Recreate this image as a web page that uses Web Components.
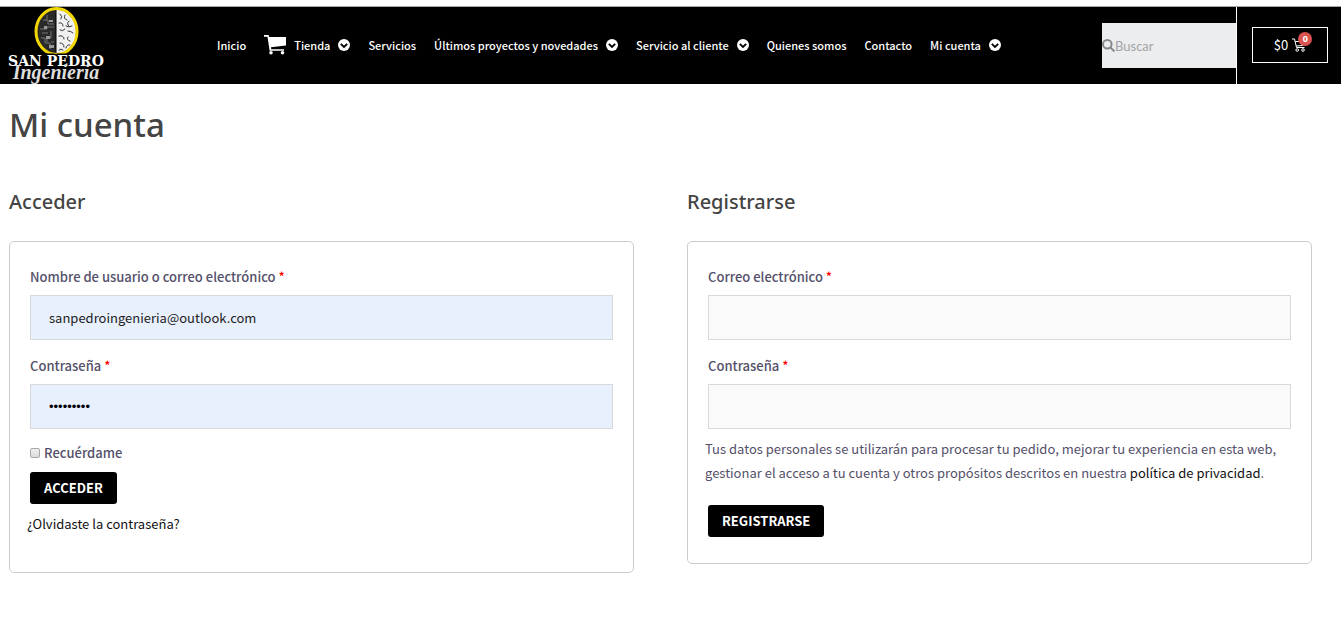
<!DOCTYPE html>
<html lang="es">
<head>
<meta charset="utf-8">
<meta name="viewport" content="width=device-width, initial-scale=1">
<title>Mi cuenta – San Pedro Ingeniería</title>
<style>
  body {
    margin: 0;
    background: #fff;
    color: #54506a;
    font-family: "Noto Sans CJK SC", "Noto Sans", sans-serif;
    font-size: 13px;
    line-height: 24px;
  }
</style>
</head>
<body>
<account-page></account-page>

<template id="t-logo">
  <style>
    :host { display: block; flex: none; width: 108px; }
    a { display: block; }
    svg { display: block; width: 108px; height: 77px; }
  </style>
  <a href="#" aria-label="San Pedro Ingeniería">
    <svg viewBox="8 0 108 77">
      <path d="M55.500 3 C43 2 37 13 37 25 C37 38 44 47 55.500 48 Z" fill="#292929"/>
      <path d="M56.500 3 C68 2 76 13 76 25 C76 38 69 47 56.500 48 Z" fill="#f1f1f1"/>
      <g fill="none" stroke="#777" stroke-width="1">
        <path d="M43 13h5v4h6M40 22h7v-2h7M41 31h4v5h5v6M47 8v4M51 24v7h-4v4M54 35h-3M42 26h6"/>
      </g>
      <path d="M44 19h3v3h-3zM49 13h4v2h-4zM46 29h4v3h-4zM49 38h5v3h-5z" fill="#999"/>
      <g fill="none" stroke="#333" stroke-width="1" stroke-linecap="round">
        <path d="M60 7q3 2 1 5M65 8q-2 4 2 5M59 16q4-1 4 3M69 14q-3 3 0 5M72 19q-3 2-6 0M60 23q3 2 5-1M68 24q3 0 5 2M59 29q5-1 5 3M68 30q-2 3 2 4M60 36q4 0 4 4M70 38q-3-1-4 3M59 43q2-2 4 0"/>
      </g>
      <ellipse cx="56.500" cy="24.500" rx="20.500" ry="23" fill="none" stroke="#f2d600" stroke-width="3"/>
      <text x="56" y="59" text-anchor="middle" font-family="DejaVu Serif" font-weight="700" font-size="14" fill="#fff" stroke="#000" stroke-width="3" paint-order="stroke">SAN PEDRO</text>
      <text x="56" y="72" text-anchor="middle" font-family="Liberation Serif" font-style="italic" font-weight="700" font-size="20" fill="#ddd">Ingenieria</text>
    </svg>
  </a>
</template>

<template id="t-nav-item">
  <style>
    :host { display: block; }
    a { display: flex; align-items: center; padding: 0 9px; color: #fff; text-decoration: none; white-space: nowrap; font-size: 11px; font-weight: 500; line-height: 24px; }
    svg { display: none; fill: #fff; flex: none; }
    :host([cart]) .cart { display: block; width: 22px; height: 20px; margin-right: 8px; }
    :host([menu]) .chev { display: block; width: 12px; height: 12px; margin-left: 8px; }
  </style>
  <a href="#">
    <svg class="cart" viewBox="0 0 22 20" aria-hidden="true">
      <path d="M0 0h4.500l.8 2H22v8.500L7 12.200l.3 2H20v1.600H5.600L3.500 1.700H0z"/>
      <circle cx="7" cy="17.700" r="1.800"/><circle cx="18.500" cy="17.700" r="1.800"/>
    </svg>
    <span><slot></slot></span>
    <svg class="chev" viewBox="0 0 12 12" aria-hidden="true">
      <circle cx="6" cy="6" r="6"/>
      <path d="M2.800 4.800 6 8l3.200-3.200" fill="none" stroke="#000" stroke-width="1.800"/>
    </svg>
  </a>
</template>

<template id="t-search">
  <style>
    :host { display: block; }
    form { display: flex; align-items: center; width: 134px; height: 45px; background: #ecedef; }
    svg { display: block; flex: none; width: 13px; height: 13px; }
    input { min-width: 0; flex: 1; border: 0; padding: 0; background: none; outline: none; font: 13px/20px Lato, sans-serif; color: #555; }
    input::placeholder { color: #a3a4a6; opacity: 1; }
  </style>
  <form role="search">
    <svg viewBox="0 0 13 13" aria-hidden="true" fill="none" stroke="#85878a" stroke-width="2"><circle cx="5.300" cy="5.300" r="4.300"/><path d="m8.400 8.400 4 4"/></svg>
    <input type="search" placeholder="Buscar" aria-label="Buscar">
  </form>
</template>

<template id="t-cart">
  <style>
    :host { display: flex; align-items: center; align-self: stretch; padding: 0 13px 1px 15px; border-left: 1px solid #fff; }
    a { box-sizing: border-box; display: flex; align-items: center; justify-content: center; gap: 4px; width: 76px; height: 36px; border: 1px solid #fff; color: #fff; font-size: 13px; line-height: 20px; text-decoration: none; }
    .icon { position: relative; display: block; width: 14px; height: 14px; }
    svg { display: block; width: 14px; height: 14px; }
    .badge { position: absolute; left: 6px; top: -6px; width: 14px; height: 14px; border-radius: 50%; background: #d9534f; font: 700 9px/14px "Noto Sans", sans-serif; text-align: center; }
  </style>
  <a href="#" aria-label="Carrito">
    <span>$0</span>
    <span class="icon">
      <svg viewBox="0 0 14 14" fill="none" stroke="#fff" aria-hidden="true"><path d="M0 1h2.500l2 8.500h8M3.200 3.500H12l-1 4-6.800.500"/><circle cx="5.200" cy="12" r="1.300"/><circle cx="11" cy="12" r="1.300"/></svg>
      <span class="badge">0</span>
    </span>
  </a>
</template>

<template id="t-header">
  <style>
    :host { display: block; padding-top: 6px; }
    header { display: flex; align-items: center; min-height: 77px; padding-left: 8px; background: #000; border-top: 1px solid #a5a8ab; }
    .main { display: flex; flex: 1; align-items: center; justify-content: space-between; }
    nav { display: flex; align-items: center; padding-bottom: 2px; }
  </style>
  <header>
    <div class="main">
      <site-logo></site-logo>
      <nav aria-label="Principal">
        <nav-item>Inicio</nav-item>
        <nav-item cart menu>Tienda</nav-item>
        <nav-item>Servicios</nav-item>
        <nav-item menu>Últimos proyectos y novedades</nav-item>
        <nav-item menu>Servicio al cliente</nav-item>
        <nav-item>Quienes somos</nav-item>
        <nav-item>Contacto</nav-item>
        <nav-item menu>Mi cuenta</nav-item>
      </nav>
      <site-search></site-search>
    </div>
    <mini-cart></mini-cart>
  </header>
</template>

<template id="t-field">
  <style>
    :host { display: block; padding: 0 3px; margin-bottom: 14px; }
    label { display: block; margin-bottom: 6px; font-weight: 500; }
    .req { color: #f00; }
    input { box-sizing: border-box; display: block; width: 100%; height: 45px; padding: 0 18px; border: 1px solid #d9d9dc; border-radius: 0; background: #fafafa; color: #222; font: inherit; outline: none; }
    input[type="password"] { font-family: "Liberation Sans", sans-serif; color: #000; }
    :host([filled]) input { background: #e8f0fe; }
  </style>
  <label for="f"><slot></slot> <span class="req">*</span></label>
  <input id="f" required>
</template>

<template id="t-check">
  <style>
    :host { display: block; padding: 0 3px; }
    label { display: inline-flex; align-items: center; gap: 4px; font-weight: 500; }
    input { appearance: none; box-sizing: border-box; width: 10px; height: 10px; margin: 0; border: 1px solid #a8a8a8; border-radius: 2px; background: linear-gradient(#efefef, #dcdcdc); }
  </style>
  <label><input type="checkbox"><span><slot></slot></span></label>
</template>

<template id="t-button">
  <style>
    :host { display: block; padding: 0 3px; }
    button { display: block; height: 32px; padding: 0 14px; border: 0; border-radius: 3px; background: #000; color: #fff; font: inherit; font-weight: 700; line-height: 32px; }
  </style>
  <button type="button"><slot></slot></button>
</template>

<template id="t-panel">
  <style>
    :host { display: block; }
    h2 { margin: 0 0 24px; color: #444; font: 500 20px/30px "Noto Sans", sans-serif; }
    .card { padding: 23px 17px 26px; border: 1px solid #ccc; border-radius: 5px; }
  </style>
  <h2></h2>
  <div class="card"><slot></slot></div>
</template>

<template id="t-page">
  <style>
    :host { display: block; }
    main { padding: 21px 29px 24px 9px; }
    h1 { margin: 0 0 42px; color: #444; font: 500 33px/40px "Noto Sans", sans-serif; }
    .columns { display: grid; grid-template-columns: 1fr 1fr; align-items: start; gap: 53px; }
    p { margin: 0; }
    a { color: #111; text-decoration: none; }
    .remember { margin: -2px 0 7px; }
    .lost { margin: 8px 0 10px; }
    .privacy { margin: -6px 0 20px; }
  </style>
  <site-header></site-header>
  <main>
    <h1>Mi cuenta</h1>
    <div class="columns">
      <form-panel heading="Acceder">
        <form-field filled type="text" value="sanpedroingenieria@outlook.com">Nombre de usuario o correo electrónico</form-field>
        <form-field filled type="password" value="contrasen">Contraseña</form-field>
        <check-field class="remember">Recuérdame</check-field>
        <action-button>ACCEDER</action-button>
        <p class="lost"><a href="#">¿Olvidaste la contraseña?</a></p>
      </form-panel>
      <form-panel heading="Registrarse">
        <form-field type="email">Correo electrónico</form-field>
        <form-field type="password">Contraseña</form-field>
        <p class="privacy">Tus datos personales se utilizarán para procesar tu pedido, mejorar tu experiencia en esta web, gestionar el acceso a tu cuenta y otros propósitos descritos en nuestra <a href="#">política de privacidad</a>.</p>
        <action-button>REGISTRARSE</action-button>
      </form-panel>
    </div>
  </main>
</template>

<script>
  class TemplateElement extends HTMLElement {
    constructor() {
      super();
      const template = document.getElementById(this.constructor.template);
      this.attachShadow({ mode: 'open' }).append(template.content.cloneNode(true));
    }
  }
  class SiteLogo extends TemplateElement { static template = 't-logo'; }
  class NavItem extends TemplateElement { static template = 't-nav-item'; }
  class SiteSearch extends TemplateElement { static template = 't-search'; }
  class MiniCart extends TemplateElement { static template = 't-cart'; }
  class SiteHeader extends TemplateElement { static template = 't-header'; }
  class CheckField extends TemplateElement { static template = 't-check'; }
  class ActionButton extends TemplateElement { static template = 't-button'; }
  class FormField extends TemplateElement {
    static template = 't-field';
    connectedCallback() {
      const input = this.shadowRoot.querySelector('input');
      input.type = this.getAttribute('type') || 'text';
      input.value = this.getAttribute('value') || '';
    }
  }
  class FormPanel extends TemplateElement {
    static template = 't-panel';
    connectedCallback() {
      this.shadowRoot.querySelector('h2').textContent = this.getAttribute('heading');
    }
  }
  class AccountPage extends TemplateElement { static template = 't-page'; }

  customElements.define('site-logo', SiteLogo);
  customElements.define('nav-item', NavItem);
  customElements.define('site-search', SiteSearch);
  customElements.define('mini-cart', MiniCart);
  customElements.define('site-header', SiteHeader);
  customElements.define('form-field', FormField);
  customElements.define('check-field', CheckField);
  customElements.define('action-button', ActionButton);
  customElements.define('form-panel', FormPanel);
  customElements.define('account-page', AccountPage);
</script>
</body>
</html>
